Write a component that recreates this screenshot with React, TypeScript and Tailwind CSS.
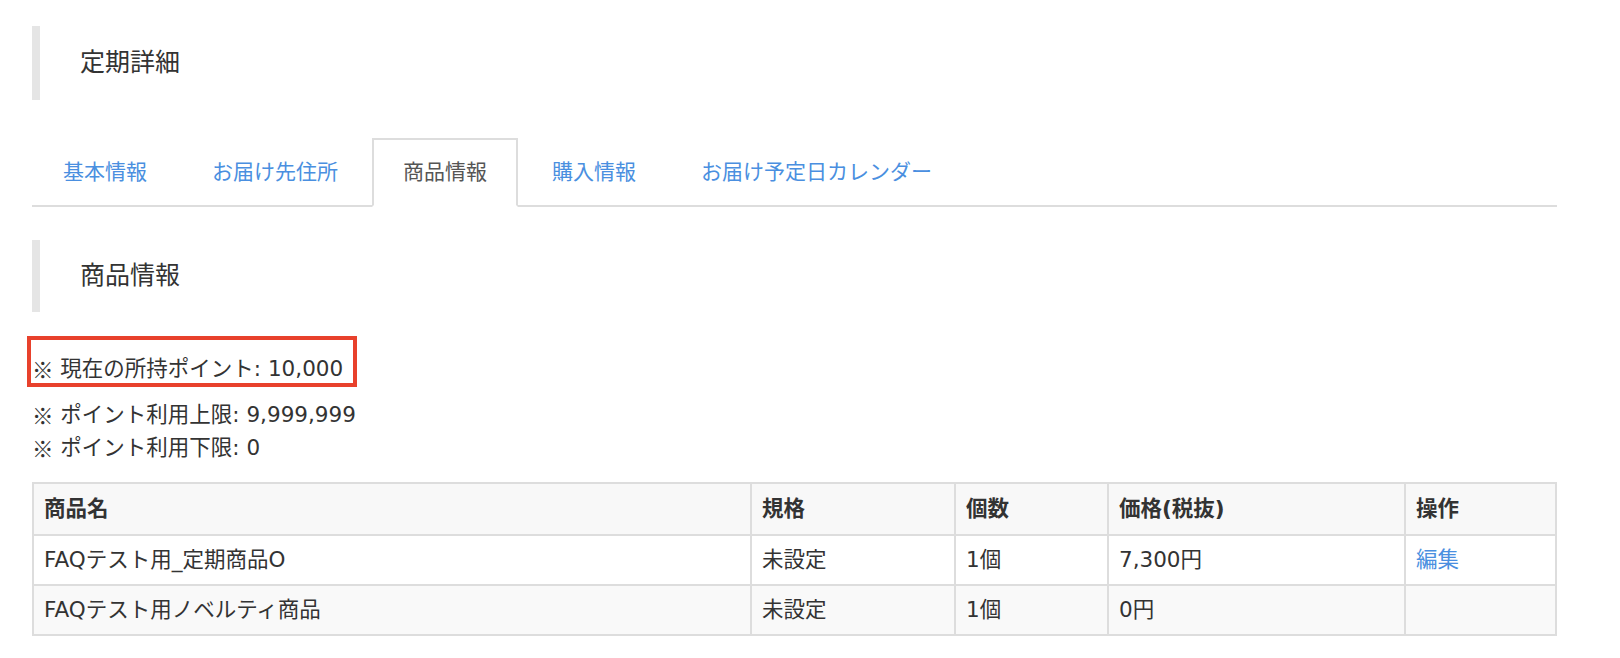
import React from "react";

const tabs = ["基本情報", "お届け先住所", "商品情報", "購入情報", "お届け予定日カレンダー"];

const rows = [
  { name: "FAQテスト用_定期商品O", spec: "未設定", qty: "1個", price: "7,300円", edit: true },
  { name: "FAQテスト用ノベルティ商品", spec: "未設定", qty: "1個", price: "0円", edit: false },
];

const Heading = ({ children, h }: { children: React.ReactNode; h: string }) => (
  <div className={`flex items-center border-l-8 border-[#e5e5e5] pl-[40px] text-[25px] ${h}`}>
    {children}
  </div>
);

// ※ mark comes from the CJK font so it gets its full width
const Note = ({ children }: { children: React.ReactNode }) => (
  <div className="flex h-[33px] items-center whitespace-pre">
    <span style={{ fontFamily: '"Noto Sans CJK JP", sans-serif' }}>※</span>
    <span> {children}</span>
  </div>
);

const App = () => {
  return (
    <div
      className="min-h-[658px] w-full bg-white pl-[32px] pt-[26px] text-[#333]"
      style={{ fontFamily: '"DejaVu Sans", "Noto Sans CJK JP", sans-serif' }}
    >
      <div className="w-[1525px]">
        {/* Page title */}
        <Heading h="h-[74px]">定期詳細</Heading>

        {/* Tabs */}
        <ul className="mt-[38px] flex border-b-2 border-[#ddd]">
          {tabs.map((t) => {
            const active = t === "商品情報";
            return (
              <li key={t} className="-mb-[2px] mr-[3px]">
                <a
                  className={`flex h-[69px] items-center border-2 px-[29px] text-[21px] ${
                    active
                      ? "border-[#ddd] border-b-white bg-white text-[#555]"
                      : "border-transparent text-[#4a8fe0]"
                  }`}
                >
                  {t}
                </a>
              </li>
            );
          })}
        </ul>

        {/* Section heading */}
        <div className="mt-[33px]">
          <Heading h="h-[72px]">商品情報</Heading>
        </div>

        {/* Points */}
        <div className="text-[21.5px] leading-none">
          <div className="relative mt-[40px]">
            <Note>現在の所持ポイント: 10,000</Note>
            <div className="absolute -left-[5px] -top-[16px] h-[51px] w-[330px] border-4 border-[#e8412c]" />
          </div>
          <div className="mt-[13px]">
            <Note>ポイント利用上限: 9,999,999</Note>
          </div>
          <Note>ポイント利用下限: 0</Note>
        </div>

        {/* Items table */}
        <table className="mt-[18px] w-[1525px] border-collapse border-2 border-[#ddd] text-left text-[21.5px]">
          <thead>
            <tr className="bg-[#f8f8f8]">
              <th className="h-[52px] w-[718px] border-2 border-[#ddd] pl-[10px] font-bold">商品名</th>
              <th className="w-[204px] border-2 border-[#ddd] pl-[10px] font-bold">規格</th>
              <th className="w-[153px] border-2 border-[#ddd] pl-[10px] font-bold">個数</th>
              <th className="w-[297px] border-2 border-[#ddd] pl-[10px] font-bold">価格(税抜)</th>
              <th className="border-2 border-[#ddd] pl-[10px] font-bold">操作</th>
            </tr>
          </thead>
          <tbody>
            {rows.map((r, i) => (
              <tr key={r.name} className={i % 2 === 1 ? "bg-[#f9f9f9]" : "bg-white"}>
                <td className="h-[50px] border-2 border-[#ddd] pl-[10px]">{r.name}</td>
                <td className="border-2 border-[#ddd] pl-[10px]">{r.spec}</td>
                <td className="border-2 border-[#ddd] pl-[10px]">{r.qty}</td>
                <td className="border-2 border-[#ddd] pl-[10px]">{r.price}</td>
                <td className="border-2 border-[#ddd] pl-[10px]">
                  {r.edit && <a className="text-[#4a8fe0]">編集</a>}
                </td>
              </tr>
            ))}
          </tbody>
        </table>
      </div>
    </div>
  );
};

export default App;
